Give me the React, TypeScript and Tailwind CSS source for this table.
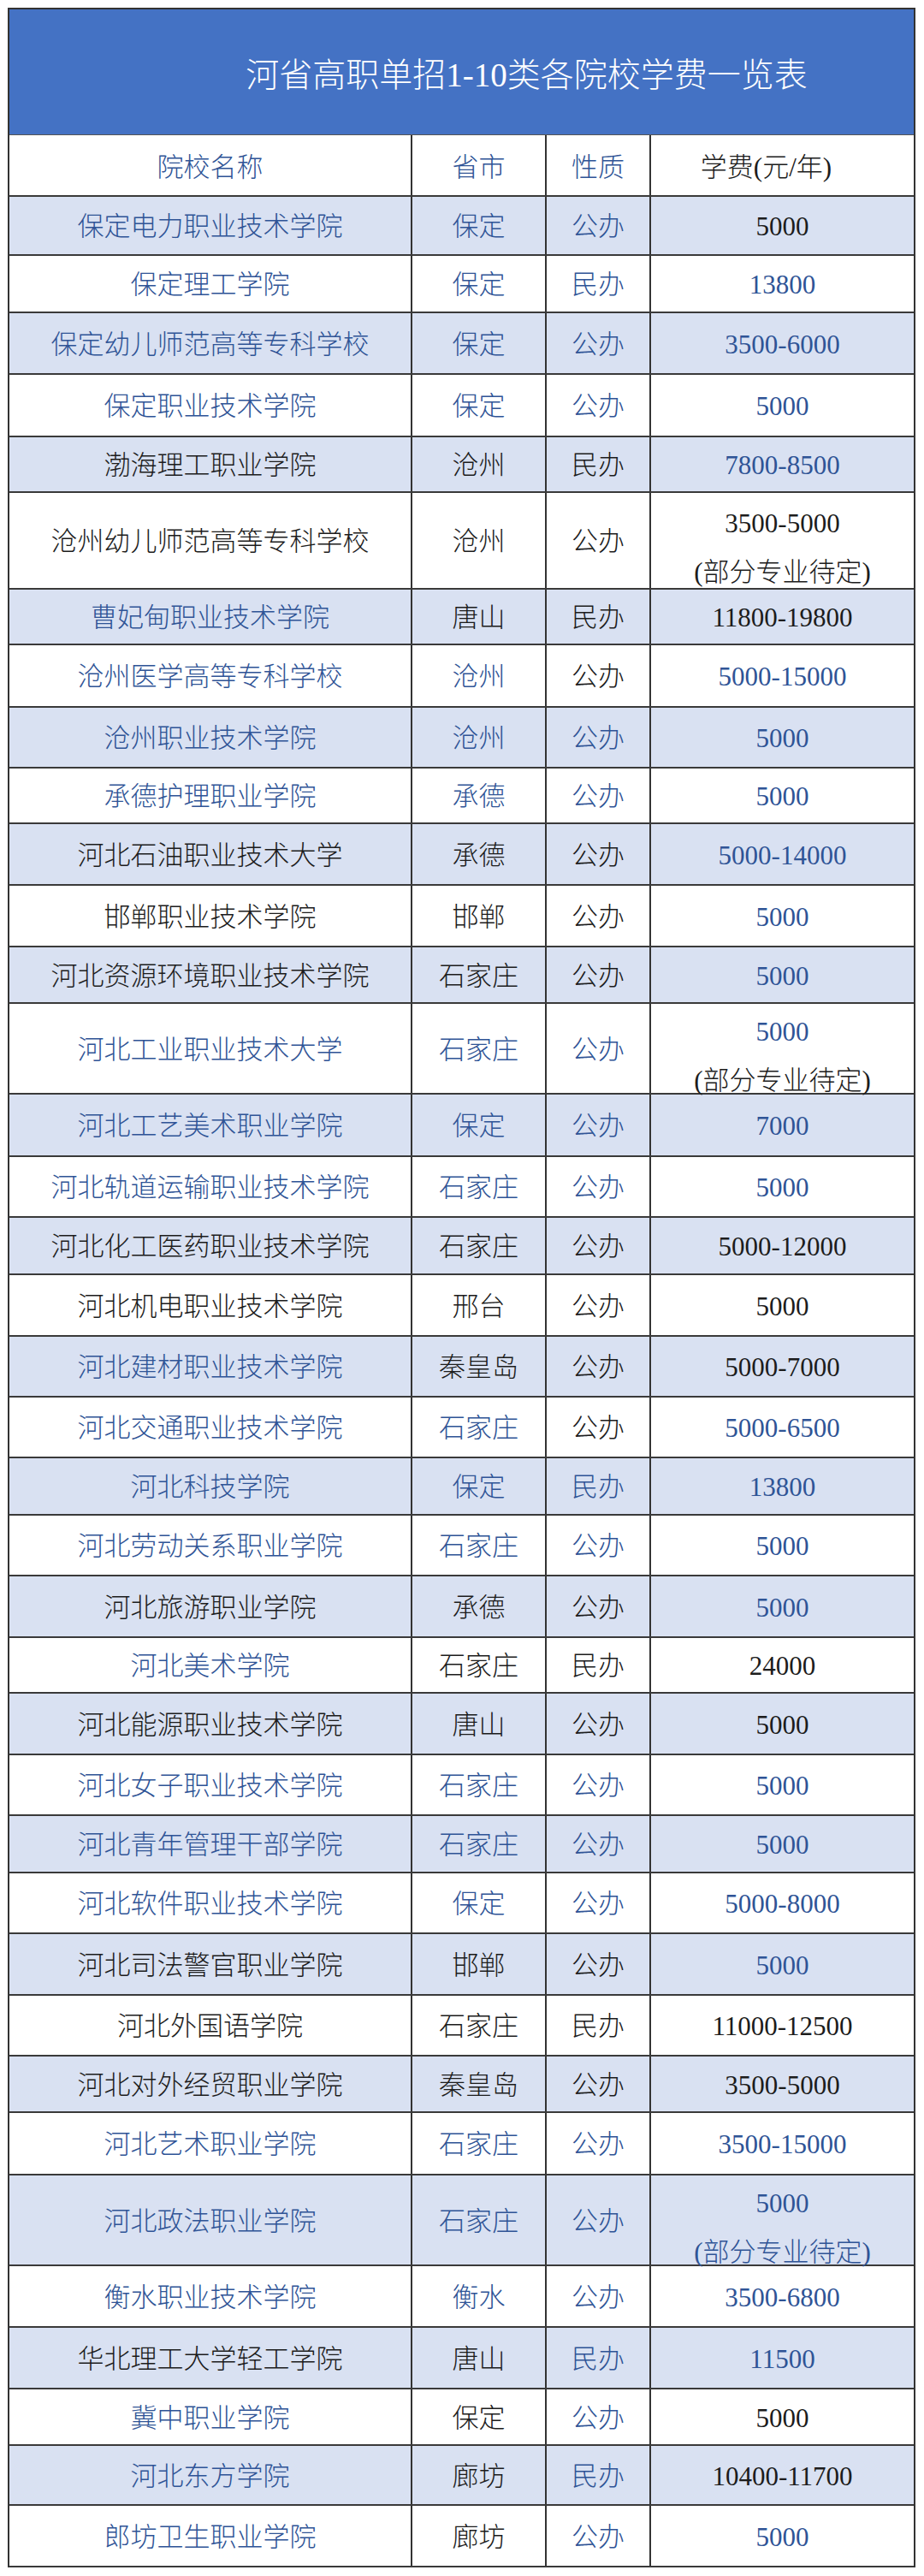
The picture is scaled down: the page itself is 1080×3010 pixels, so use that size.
import React from "react"

// [院校名称, 省市, 性质, 学费, 备注, 颜色(b=蓝 k=黑), 行高]
type Row = [string, string, string, string, string | null, string, string]

const rows: Row[] = [
  ["保定电力职业技术学院", "保定", "公办", "5000", null, "bbbk", "h-[69px]"],
  ["保定理工学院", "保定", "民办", "13800", null, "bbbb", "h-[67px]"],
  ["保定幼儿师范高等专科学校", "保定", "公办", "3500-6000", null, "bbbb", "h-[72px]"],
  ["保定职业技术学院", "保定", "公办", "5000", null, "bbbb", "h-[73px]"],
  ["渤海理工职业学院", "沧州", "民办", "7800-8500", null, "kkkb", "h-[65px]"],
  ["沧州幼儿师范高等专科学校", "沧州", "公办", "3500-5000", "(部分专业待定)", "kkkkk", "h-[113px]"],
  ["曹妃甸职业技术学院", "唐山", "民办", "11800-19800", null, "bkkk", "h-[65px]"],
  ["沧州医学高等专科学校", "沧州", "公办", "5000-15000", null, "bbkb", "h-[73px]"],
  ["沧州职业技术学院", "沧州", "公办", "5000", null, "bbbb", "h-[71px]"],
  ["承德护理职业学院", "承德", "公办", "5000", null, "bbbb", "h-[65px]"],
  ["河北石油职业技术大学", "承德", "公办", "5000-14000", null, "kkkb", "h-[72px]"],
  ["邯郸职业技术学院", "邯郸", "公办", "5000", null, "kkkb", "h-[72px]"],
  ["河北资源环境职业技术学院", "石家庄", "公办", "5000", null, "kkkb", "h-[66px]"],
  ["河北工业职业技术大学", "石家庄", "公办", "5000", "(部分专业待定)", "bbbbk", "h-[106px]"],
  ["河北工艺美术职业学院", "保定", "公办", "7000", null, "bbbb", "h-[73px]"],
  ["河北轨道运输职业技术学院", "石家庄", "公办", "5000", null, "bbbb", "h-[71px]"],
  ["河北化工医药职业技术学院", "石家庄", "公办", "5000-12000", null, "kkkk", "h-[67px]"],
  ["河北机电职业技术学院", "邢台", "公办", "5000", null, "kkkk", "h-[72px]"],
  ["河北建材职业技术学院", "秦皇岛", "公办", "5000-7000", null, "bkkk", "h-[71px]"],
  ["河北交通职业技术学院", "石家庄", "公办", "5000-6500", null, "bbkb", "h-[71px]"],
  ["河北科技学院", "保定", "民办", "13800", null, "bbbb", "h-[67px]"],
  ["河北劳动关系职业学院", "石家庄", "公办", "5000", null, "bbbb", "h-[71px]"],
  ["河北旅游职业学院", "承德", "公办", "5000", null, "kkkb", "h-[72px]"],
  ["河北美术学院", "石家庄", "民办", "24000", null, "bkkk", "h-[65px]"],
  ["河北能源职业技术学院", "唐山", "公办", "5000", null, "kkkk", "h-[72px]"],
  ["河北女子职业技术学院", "石家庄", "公办", "5000", null, "bbbb", "h-[71px]"],
  ["河北青年管理干部学院", "石家庄", "公办", "5000", null, "bbbb", "h-[67px]"],
  ["河北软件职业技术学院", "保定", "公办", "5000-8000", null, "bbbb", "h-[71px]"],
  ["河北司法警官职业学院", "邯郸", "公办", "5000", null, "kkkb", "h-[72px]"],
  ["河北外国语学院", "石家庄", "民办", "11000-12500", null, "kkkk", "h-[71px]"],
  ["河北对外经贸职业学院", "秦皇岛", "公办", "3500-5000", null, "kkkk", "h-[66px]"],
  ["河北艺术职业学院", "石家庄", "公办", "3500-15000", null, "bbbb", "h-[73px]"],
  ["河北政法职业学院", "石家庄", "公办", "5000", "(部分专业待定)", "bbbbb", "h-[106px]"],
  ["衡水职业技术学院", "衡水", "公办", "3500-6800", null, "bbbb", "h-[72px]"],
  ["华北理工大学轻工学院", "唐山", "民办", "11500", null, "kkbb", "h-[72px]"],
  ["冀中职业学院", "保定", "公办", "5000", null, "bkbk", "h-[66px]"],
  ["河北东方学院", "廊坊", "民办", "10400-11700", null, "bkbk", "h-[70px]"],
  ["郎坊卫生职业学院", "廊坊", "公办", "5000", null, "bkbb", "h-[72px]"],
]

const tone = (c: string) => (c === "b" ? "text-[#2f5496]" : "text-[#1c1c1c]")

export default function App() {
  return (
    <div
      className="w-[1080px] bg-white pt-[9px] pl-[9px] pb-[10px]"
      style={{ fontFamily: '"Liberation Serif", "Noto Sans CJK SC", serif' }}
    >
      <div className="w-[1061px] border-x-2 border-t-2 border-[#333]">
        <div className="h-[147px] bg-[#4472c4] border-b border-[#555] flex items-center justify-center pl-[152px] pt-[8px]">
          <span className="text-[39px] text-white font-light">河省高职单招1-10类各院校学费一览表</span>
        </div>

        <div className="h-[72px] flex border-b-2 border-[#3a3a3a] text-[31px] font-light">
          <div className="w-[471px] border-r-2 border-[#333] flex items-center justify-center pt-[6px] text-[#2f5496]">院校名称</div>
          <div className="w-[157px] border-r-2 border-[#333] flex items-center justify-center pt-[6px] text-[#2f5496]">省市</div>
          <div className="w-[122px] border-r-2 border-[#333] flex items-center justify-center pt-[6px] text-[#2f5496]">性质</div>
          <div className="flex-1 flex items-center justify-center pt-[6px] pr-[38px] text-[#1c1c1c]">学费(元/年)</div>
        </div>

        {rows.map(([name, city, kind, fee, note, colors, h], i) => (
          <div
            key={i}
            className={`${h} flex border-b-2 border-[#3a3a3a] text-[31px] font-light ${i % 2 === 0 ? "bg-[#d9e1f2]" : "bg-white"}`}
          >
            <div className={`w-[471px] border-r-2 border-[#333] flex items-center justify-center pt-[4px] ${tone(colors[0])}`}>{name}</div>
            <div className={`w-[157px] border-r-2 border-[#333] flex items-center justify-center pt-[4px] ${tone(colors[1])}`}>{city}</div>
            <div className={`w-[122px] border-r-2 border-[#333] flex items-center justify-center pt-[4px] ${tone(colors[2])}`}>{kind}</div>
            {note ? (
              <div className="flex-1 flex flex-col items-center justify-center gap-[21px] pt-[18px]">
                <div className={`leading-[36px] ${tone(colors[3])}`}>{fee}</div>
                <div className={`leading-[36px] ${tone(colors[4])}`}>{note}</div>
              </div>
            ) : (
              <div className={`flex-1 flex items-center justify-center pt-[4px] ${tone(colors[3])}`}>{fee}</div>
            )}
          </div>
        ))}
      </div>
    </div>
  )
}
